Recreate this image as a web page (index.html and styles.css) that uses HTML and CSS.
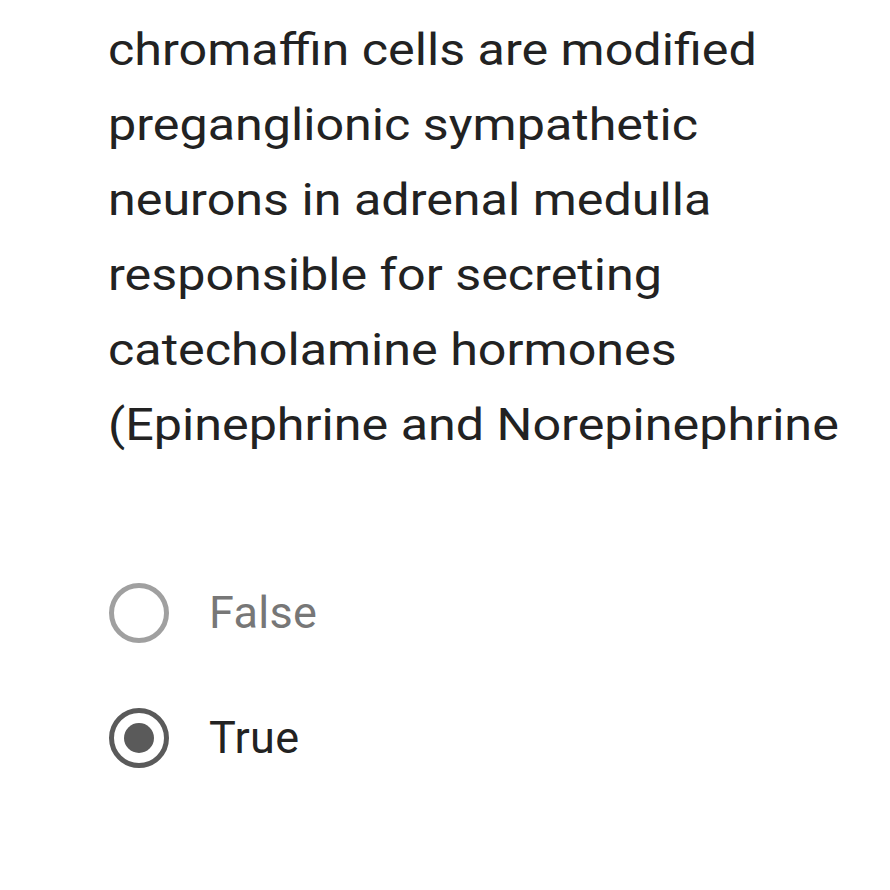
FILE: index.html
```html
<!DOCTYPE html>
<html>
<head>
<meta charset="utf-8">
<link rel="stylesheet" href="styles.css">
</head>
<body>
<div class="question">
  <div class="title">chromaffin cells are modified<br>preganglionic sympathetic<br>neurons in adrenal medulla<br>responsible for secreting<br>catecholamine hormones<br>(Epinephrine and Norepinephrine</div>
  <div class="options">
    <div class="option">
      <span class="radio"></span>
      <span class="label off">False</span>
    </div>
    <div class="option">
      <span class="radio checked"></span>
      <span class="label">True</span>
    </div>
  </div>
</div>
</body>
</html>
```
FILE: styles.css
```css
html, body {
  margin: 0;
  padding: 0;
  background: #ffffff;
}
body {
  font-family: Roboto, "Noto Sans", sans-serif;
  color: #222222;
}
.question {
  padding: 12px 0 0 108px;
}
.title {
  width: fit-content;
  font-size: 45px;
  line-height: 75px;
  white-space: nowrap;
  transform: scaleX(1.117);
  transform-origin: left top;
}
.options {
  margin-top: 121px;
  display: flex;
  flex-direction: column;
  gap: 65px;
}
.option {
  display: flex;
  align-items: center;
  gap: 40px;
  height: 60px;
}
.radio {
  box-sizing: border-box;
  width: 60px;
  height: 60px;
  margin-left: 1px;
  border-radius: 50%;
  border: 5px solid #a0a0a0;
  display: flex;
  align-items: center;
  justify-content: center;
  flex: none;
}
.radio.checked {
  border-color: #5a5a5a;
}
.radio.checked::after {
  content: "";
  width: 30px;
  height: 30px;
  border-radius: 50%;
  background: #5a5a5a;
}
.label {
  font-size: 45px;
  line-height: 60px;
  letter-spacing: 0.3px;
  color: #222222;
}
.label.off {
  color: #777777;
}
```
